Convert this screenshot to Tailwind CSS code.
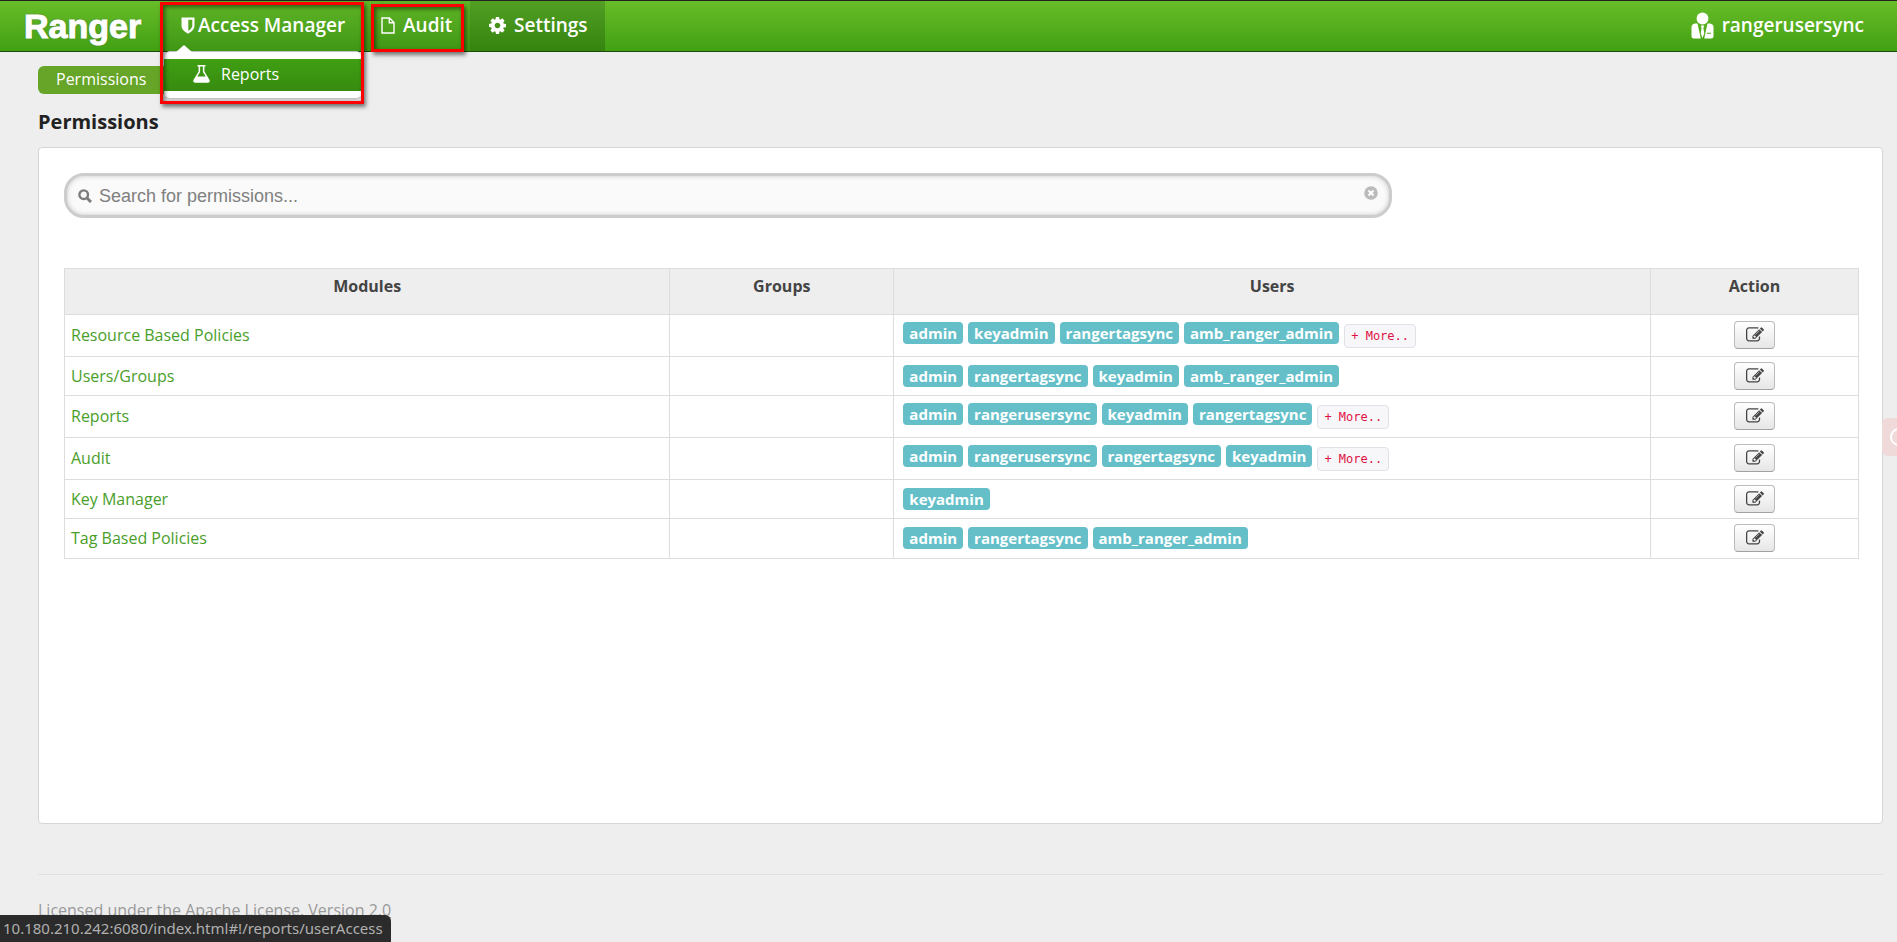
<!DOCTYPE html>
<html lang="en">
<head>
    <meta charset="UTF-8">
    <meta name="viewport" content="width=device-width, initial-scale=1.0">
    <title>Ranger - Permissions</title>
    <script src="https://cdn.jsdelivr.net/npm/@tailwindcss/browser@4"></script>
</head>
<body class="relative min-h-screen overflow-x-hidden bg-[#eeeeee] font-['Open_Sans',sans-serif] text-base text-[#444444]">
    <!-- Icons -->
    <svg class="hidden">
        <symbol id="icon-edit" viewBox="0 0 1792 1792">
            <path d="M888 1184l116-116-152-152-116 116v56h96v96h56zm440-720q-16-16-33 1l-350 350q-17 17-1 33t33-1l350-350q17-17 1-33zm80 594v190q0 119-84.5 203.5t-203.5 84.5h-832q-119 0-203.5-84.5t-84.5-203.5v-832q0-119 84.5-203.5t203.5-84.5h832q63 0 117 25 15 7 18 23 3 17-9 29l-49 49q-14 14-32 8-23-6-45-6h-832q-66 0-113 47t-47 113v832q0 66 47 113t113 47h832q66 0 113-47t47-113v-126q0-13 9-22l64-64q15-15 35-7t20 29zm-96-738l288 288-672 672h-288v-288zm444 132l-92 92-288-288 92-92q28-28 68-28t68 28l152 152q28 28 28 68t-28 68z"/>
        </symbol>
        <symbol id="icon-cog" viewBox="128 128 1536 1536">
            <path d="M1152 896q0-106-75-181t-181-75-181 75-75 181 75 181 181 75 181-75 75-181zm512-109v222q0 12-8 23t-20 13l-185 28q-19 54-39 91 35 50 107 138 10 12 10 25t-9 23q-27 37-99 108t-94 71q-12 0-26-9l-138-108q-44 23-91 38-16 136-29 186-7 28-36 28h-222q-14 0-24.5-8.5t-11.5-21.5l-28-184q-49-16-90-37l-141 107q-10 9-25 9-14 0-25-11-126-114-165-168-7-10-7-23 0-12 8-23 15-21 51-66.5t54-70.5q-27-50-41-99l-183-27q-13-2-21-12.5t-8-23.5v-222q0-12 8-23t19-13l186-28q14-46 39-92-40-57-107-138-10-12-10-24 0-10 9-23 26-36 98.5-107.5t94.5-71.5q13 0 26 10l138 107q44-23 91-38 16-136 29-186 7-28 36-28h222q14 0 24.5 8.5t11.5 21.5l28 184q49 16 90 37l142-107q9-9 24-9 13 0 25 10 129 119 165 170 7 8 7 22 0 12-8 23-15 21-51 66.5t-54 70.5q26 50 41 98l183 28q13 2 21 12.5t8 23.5z"/>
        </symbol>
    </svg>

    <!-- Navbar -->
    <header class="flex h-[52px] border-t border-b border-t-[#222222] border-b-[#1c4a08] bg-linear-to-b from-[#68bd28] to-[#41a012] text-[19px] font-semibold text-white">
        <a href="#" class="flex w-[164px] items-center pl-6 font-['Liberation_Sans',sans-serif] text-[34px] leading-none font-bold [-webkit-text-stroke:1px_white] [text-shadow:0_0_2px_#555]">Ranger</a>
        <nav class="flex">
            <div class="relative flex">
                <a href="#" class="flex w-[206px] items-center gap-[3px] bg-linear-to-b from-[#60b526] to-[#3f9714] pb-px pl-[17px]">
                    <svg class="h-[17px] w-[14px] shrink-0" viewBox="0 0 14 17" fill="white"><path fill-rule="evenodd" d="M0.500 0.500H13.500V8.500C13.500 12.500 10 15 7 16.700C4 15 0.500 12.500 0.500 8.500ZM7.300 2.800V13.800C9.700 12.300 11.300 10.600 11.300 8.500V2.800Z"/></svg>
                    Access Manager
                </a>
                <!-- Dropdown -->
                <div class="absolute top-full left-0 z-10 w-[198px] rounded-md border-y border-[#c4c4c4] bg-white py-[7px] text-base font-normal shadow-md">
                    <svg class="absolute -top-[7px] left-3 h-[7px] w-4" viewBox="0 0 16 7" fill="white"><path d="M0 7L8 0L16 7Z"/></svg>
                    <a href="#" class="flex h-8 items-center gap-[11px] bg-linear-to-b from-[#409f12] to-[#378b10] pb-0.5 pl-[29px]">
                        <svg class="h-[18px] w-[17px]" viewBox="0 0 17 18" fill="white"><path fill-rule="evenodd" d="M4.500 0H12.500V1.500H11.400V6.400L16.400 14.800Q17.600 17.600 14.800 17.700H2.200Q-0.600 17.600 0.600 14.800L5.600 6.400V1.500H4.500ZM7.100 1.500V6.900L4.300 11.500H12.700L9.900 6.900V1.500Z"/></svg>
                        Reports
                    </a>
                </div>
                <div class="pointer-events-none absolute top-px -left-1 z-20 h-[102px] w-[204px] border-[3px] border-[#ff0000] shadow-[2px_3px_4px_rgba(0,0,0,0.5),inset_2px_2px_4px_rgba(0,0,0,0.5)]"></div>
            </div>
            <div class="relative flex">
                <a href="#" class="flex w-[100px] items-center gap-2 bg-linear-to-b from-[#60b526] to-[#3f9714] pb-px pl-[11px]">
                    <svg class="h-[17px] w-[14px]" viewBox="0 0 14 17" fill="none" stroke="white" stroke-width="1.400"><path d="M1 1H8.500L13 5.500V16H1ZM8.300 1V5.800H13"/></svg>
                    Audit
                </a>
                <div class="pointer-events-none absolute top-[3px] left-px z-20 h-12 w-[93px] border-[3px] border-[#ff0000] shadow-[2px_3px_4px_rgba(0,0,0,0.5),inset_2px_2px_4px_rgba(0,0,0,0.5)]"></div>
            </div>
            <a href="#" class="flex w-[135px] items-center gap-2 bg-linear-to-b from-[#529f23] to-[#35840f] pb-px pl-[19px]">
                <svg class="size-[17px]" fill="white"><use href="#icon-cog"/></svg>
                Settings
            </a>
        </nav>
        <a href="#" class="ml-auto flex items-center gap-2 pr-[33px] pb-px">
            <svg class="h-[27px] w-[23px]" viewBox="0 0 23 27" fill="white"><circle cx="11.500" cy="6.500" r="5.900"/><path fill-rule="evenodd" d="M4 11.500H6.500L9.800 26.500H3Q0.500 26.500 0.500 24V15Q0.500 12 4 11.500ZM19 11.500Q22.500 12 22.500 15V24Q22.500 26.500 20 26.500H13.200L16.500 11.500ZM15.800 20.800V21.700H20V20.800Z"/><path d="M9.700 13.500H13.300L12.400 16L13.300 21.500L11.500 26L9.700 21.500L10.600 16Z"/></svg>
            rangerusersync
        </a>
    </header>

    <main class="pr-[14px] pl-[38px]">
        <!-- Breadcrumb -->
        <ul class="flex pt-[14px]">
            <li class="h-7 w-[140px] rounded-md bg-[#66a527] pl-[18px] leading-[26px] text-white">Permissions</li>
        </ul>
        <h1 class="mt-[14px] text-xl leading-7 font-bold text-[#222222]">Permissions</h1>

        <section class="mt-[11px] min-h-[677px] rounded border border-[#d6d6d6] bg-white pt-[25px] pr-[23px] pl-[25px]">
            <!-- Search -->
            <div class="flex h-[45px] w-[74%] items-center rounded-[20px] border-[3px] border-[#cccccc] bg-[#fafafa] pr-[11px] pl-[11px] shadow-[inset_0_0_5px_rgba(0,0,0,0.2)]">
                <label for="search" aria-label="Search">
                    <svg class="size-[14px]" viewBox="0 0 14 14" fill="none" stroke="#7c7c7c" stroke-width="2.400"><circle cx="5.700" cy="5.700" r="4.300"/><path d="M9 9L13 13" stroke-width="3"/></svg>
                </label>
                <input id="search" type="text" placeholder="Search for permissions..." class="ml-[7px] min-w-0 flex-1 bg-transparent font-['Liberation_Sans',sans-serif] text-lg outline-none placeholder:text-[#808080]">
                <button type="button" aria-label="Clear" class="mb-1.5">
                    <svg class="size-[14px]" viewBox="0 0 14 14"><circle cx="7" cy="7" r="6.800" fill="#bbbbbb"/><path d="M4.500 4.500L9.500 9.500M9.500 4.500L4.500 9.500" stroke="white" stroke-width="2"/></svg>
                </button>
            </div>

            <!-- Permissions table -->
            <table class="mt-[50px] w-full table-fixed border-separate border-spacing-0 border border-[#dddddd] [&_a]:text-[#4a9e2a] [&_td]:border-t [&_td]:border-l [&_td]:border-[#dddddd] [&_td]:pb-px [&_td:first-child]:border-l-0 [&_td:first-child]:pl-1.5 [&_th]:border-l [&_th]:border-[#dddddd] [&_th:first-child]:border-l-0">
                <colgroup>
                    <col class="w-[33.7%]">
                    <col class="w-[12.5%]">
                    <col class="w-[42.2%]">
                    <col class="w-[11.6%]">
                </colgroup>
                <thead>
                    <tr class="h-[45px] bg-[#eeeeee] align-top leading-[34px]">
                        <th class="font-bold">Modules</th>
                        <th class="font-bold">Groups</th>
                        <th class="font-bold">Users</th>
                        <th class="font-bold">Action</th>
                    </tr>
                </thead>
                <tbody>
                    <tr class="h-[42px]">
                        <td><a href="#">Resource Based Policies</a></td>
                        <td></td>
                        <td>
                            <div class="flex gap-[5px] pl-[9px] text-[15px] leading-[22px] font-bold text-white">
                                <span class="h-[22px] rounded bg-[#64bfc9] px-1.5">admin</span>
                                <span class="h-[22px] rounded bg-[#64bfc9] px-1.5">keyadmin</span>
                                <span class="h-[22px] rounded bg-[#64bfc9] px-1.5">rangertagsync</span>
                                <span class="h-[22px] rounded bg-[#64bfc9] px-1.5">amb_ranger_admin</span>
                                <button type="button" class="mt-0.5 h-6 rounded border border-[#e1e1e8] bg-[#f7f7f9] px-1.5 font-['DejaVu_Sans_Mono',monospace] text-xs font-normal text-[#dd1144]">+ More..</button>
                            </div>
                        </td>
                        <td class="text-center"><button type="button" aria-label="Edit" class="inline-flex h-7 w-[41px] items-center justify-center rounded-sm border border-[#bbbbbb] border-b-[#a2a2a2] bg-linear-to-b from-white to-[#e6e6e6] align-middle"><svg class="size-[18px]" fill="#444444"><use href="#icon-edit"/></svg></button></td>
                    </tr>
                    <tr class="h-[39px]">
                        <td><a href="#">Users/Groups</a></td>
                        <td></td>
                        <td>
                            <div class="flex gap-[5px] pl-[9px] text-[15px] leading-[22px] font-bold text-white">
                                <span class="h-[22px] rounded bg-[#64bfc9] px-1.5">admin</span>
                                <span class="h-[22px] rounded bg-[#64bfc9] px-1.5">rangertagsync</span>
                                <span class="h-[22px] rounded bg-[#64bfc9] px-1.5">keyadmin</span>
                                <span class="h-[22px] rounded bg-[#64bfc9] px-1.5">amb_ranger_admin</span>
                            </div>
                        </td>
                        <td class="text-center"><button type="button" aria-label="Edit" class="inline-flex h-7 w-[41px] items-center justify-center rounded-sm border border-[#bbbbbb] border-b-[#a2a2a2] bg-linear-to-b from-white to-[#e6e6e6] align-middle"><svg class="size-[18px]" fill="#444444"><use href="#icon-edit"/></svg></button></td>
                    </tr>
                    <tr class="h-[42px]">
                        <td><a href="#">Reports</a></td>
                        <td></td>
                        <td>
                            <div class="flex gap-[5px] pl-[9px] text-[15px] leading-[22px] font-bold text-white">
                                <span class="h-[22px] rounded bg-[#64bfc9] px-1.5">admin</span>
                                <span class="h-[22px] rounded bg-[#64bfc9] px-1.5">rangerusersync</span>
                                <span class="h-[22px] rounded bg-[#64bfc9] px-1.5">keyadmin</span>
                                <span class="h-[22px] rounded bg-[#64bfc9] px-1.5">rangertagsync</span>
                                <button type="button" class="mt-0.5 h-6 rounded border border-[#e1e1e8] bg-[#f7f7f9] px-1.5 font-['DejaVu_Sans_Mono',monospace] text-xs font-normal text-[#dd1144]">+ More..</button>
                            </div>
                        </td>
                        <td class="text-center"><button type="button" aria-label="Edit" class="inline-flex h-7 w-[41px] items-center justify-center rounded-sm border border-[#bbbbbb] border-b-[#a2a2a2] bg-linear-to-b from-white to-[#e6e6e6] align-middle"><svg class="size-[18px]" fill="#444444"><use href="#icon-edit"/></svg></button></td>
                    </tr>
                    <tr class="h-[42px]">
                        <td><a href="#">Audit</a></td>
                        <td></td>
                        <td>
                            <div class="flex gap-[5px] pl-[9px] text-[15px] leading-[22px] font-bold text-white">
                                <span class="h-[22px] rounded bg-[#64bfc9] px-1.5">admin</span>
                                <span class="h-[22px] rounded bg-[#64bfc9] px-1.5">rangerusersync</span>
                                <span class="h-[22px] rounded bg-[#64bfc9] px-1.5">rangertagsync</span>
                                <span class="h-[22px] rounded bg-[#64bfc9] px-1.5">keyadmin</span>
                                <button type="button" class="mt-0.5 h-6 rounded border border-[#e1e1e8] bg-[#f7f7f9] px-1.5 font-['DejaVu_Sans_Mono',monospace] text-xs font-normal text-[#dd1144]">+ More..</button>
                            </div>
                        </td>
                        <td class="text-center"><button type="button" aria-label="Edit" class="inline-flex h-7 w-[41px] items-center justify-center rounded-sm border border-[#bbbbbb] border-b-[#a2a2a2] bg-linear-to-b from-white to-[#e6e6e6] align-middle"><svg class="size-[18px]" fill="#444444"><use href="#icon-edit"/></svg></button></td>
                    </tr>
                    <tr class="h-[39px]">
                        <td><a href="#">Key Manager</a></td>
                        <td></td>
                        <td>
                            <div class="flex gap-[5px] pl-[9px] text-[15px] leading-[22px] font-bold text-white">
                                <span class="h-[22px] rounded bg-[#64bfc9] px-1.5">keyadmin</span>
                            </div>
                        </td>
                        <td class="text-center"><button type="button" aria-label="Edit" class="inline-flex h-7 w-[41px] items-center justify-center rounded-sm border border-[#bbbbbb] border-b-[#a2a2a2] bg-linear-to-b from-white to-[#e6e6e6] align-middle"><svg class="size-[18px]" fill="#444444"><use href="#icon-edit"/></svg></button></td>
                    </tr>
                    <tr class="h-[40px]">
                        <td><a href="#">Tag Based Policies</a></td>
                        <td></td>
                        <td>
                            <div class="flex gap-[5px] pl-[9px] text-[15px] leading-[22px] font-bold text-white">
                                <span class="h-[22px] rounded bg-[#64bfc9] px-1.5">admin</span>
                                <span class="h-[22px] rounded bg-[#64bfc9] px-1.5">rangertagsync</span>
                                <span class="h-[22px] rounded bg-[#64bfc9] px-1.5">amb_ranger_admin</span>
                            </div>
                        </td>
                        <td class="text-center"><button type="button" aria-label="Edit" class="inline-flex h-7 w-[41px] items-center justify-center rounded-sm border border-[#bbbbbb] border-b-[#a2a2a2] bg-linear-to-b from-white to-[#e6e6e6] align-middle"><svg class="size-[18px]" fill="#444444"><use href="#icon-edit"/></svg></button></td>
                    </tr>
                </tbody>
            </table>
        </section>

        <!-- Footer -->
        <footer class="mt-[50px] border-t border-[#e0e0e0] pt-[23px]">
            <a href="#" class="text-[#999999] underline">Licensed under the Apache License, Version 2.0</a>
        </footer>
    </main>

    <!-- Side widget -->
    <div class="fixed top-[418px] right-0 flex h-[38px] w-[15px] items-center overflow-hidden rounded-l-md bg-[#efd9d9] pl-2">
        <svg class="size-[18px] shrink-0" viewBox="0 0 18 18" fill="none" stroke="white" stroke-width="2"><circle cx="9" cy="9" r="8"/></svg>
    </div>

    <!-- Link status -->
    <div class="fixed bottom-0 left-0 h-[27px] rounded-tr-md bg-[#2b2b2b] pr-2 pl-[3px] font-['Noto_Sans',sans-serif] text-[15px] leading-[27px] text-[#b0b0b0]">10.180.210.242:6080/index.html#!/reports/userAccess</div>
</body>
</html>
